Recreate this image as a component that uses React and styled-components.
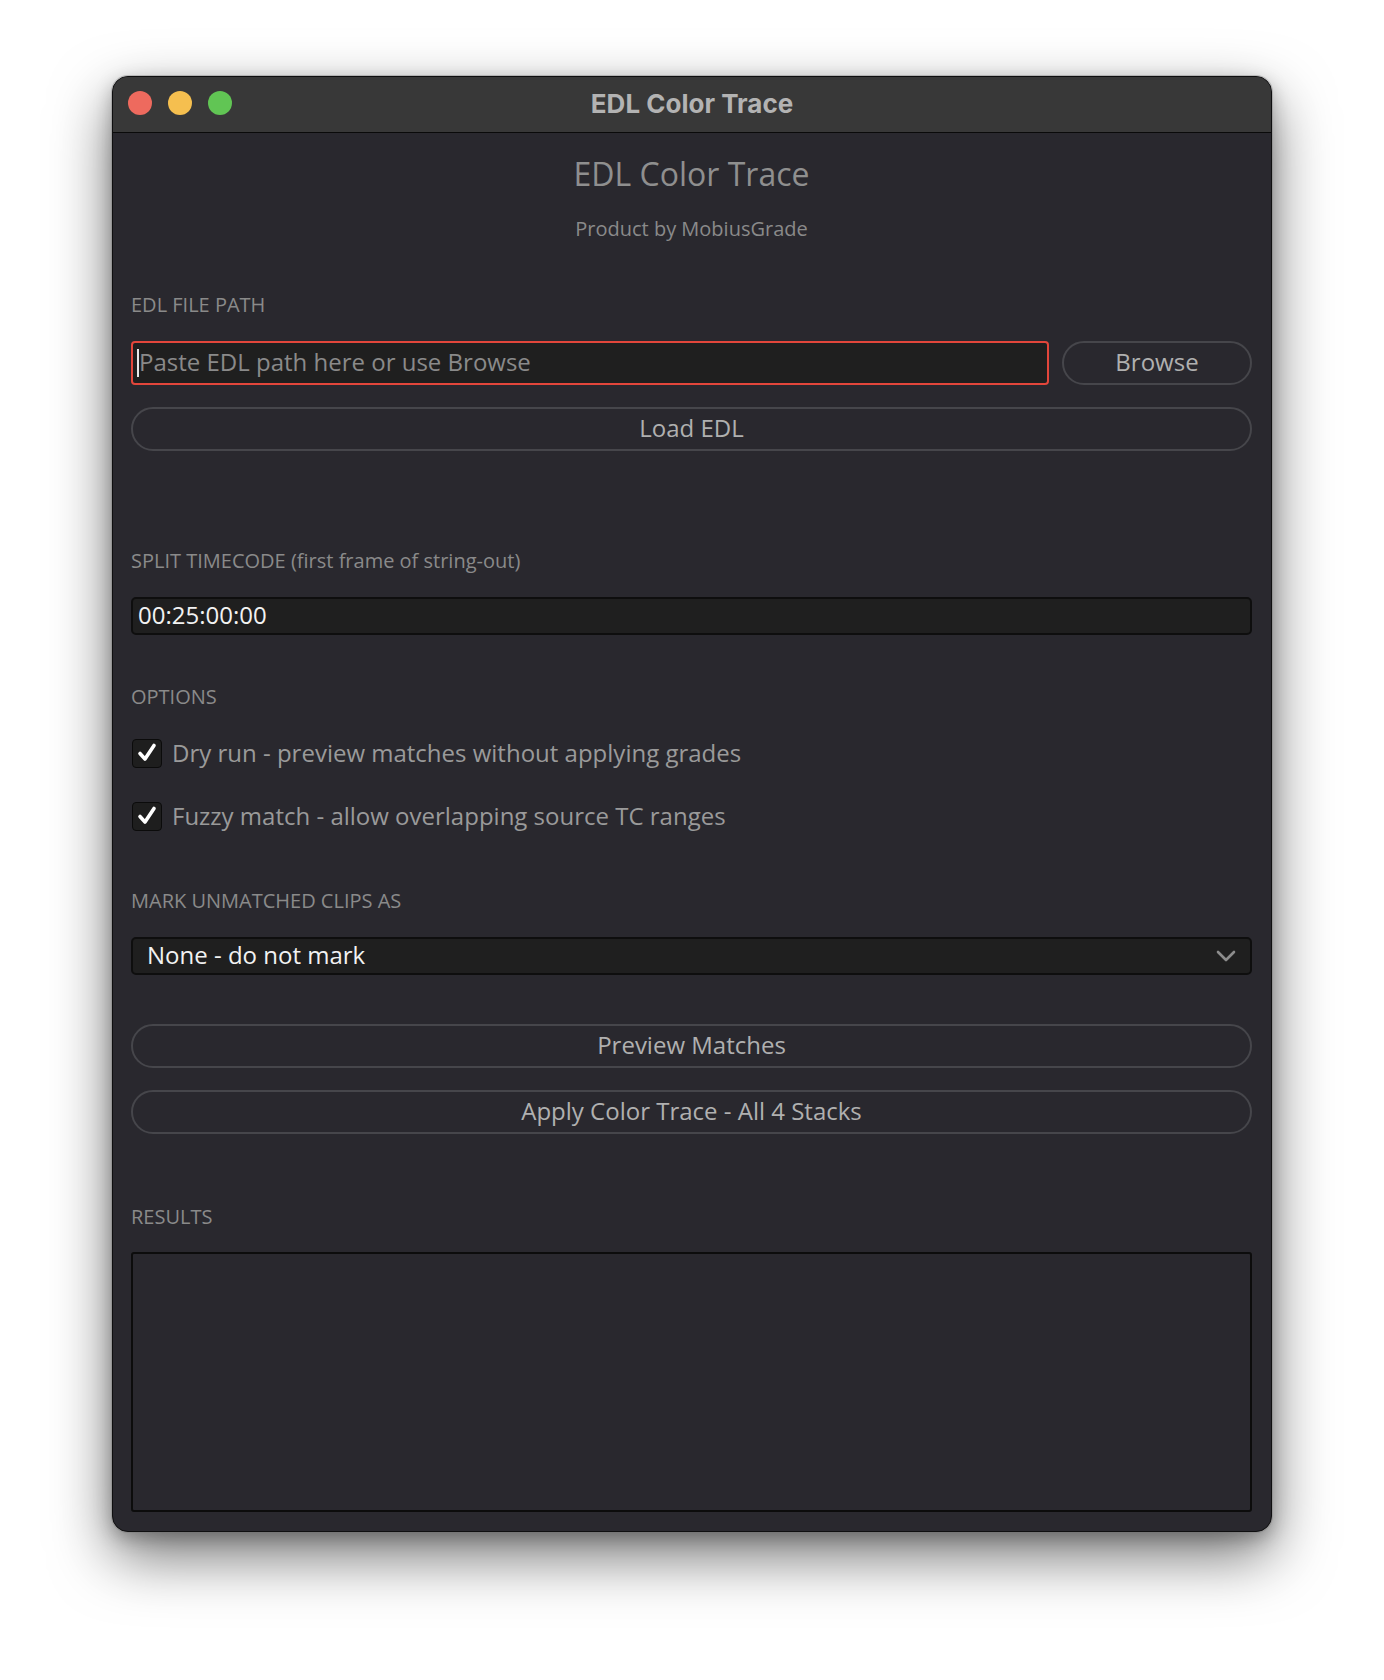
import React from "react";
import styled, { createGlobalStyle } from "styled-components";

const Global = createGlobalStyle`
  html, body { margin: 0; padding: 0; background: #ffffff; }
  body { font-family: "Open Sans", "Noto Sans", sans-serif; }
  * { box-sizing: border-box; }
`;

const Page = styled.div`
  width: 1384px;
  height: 1680px;
  padding: 76px 0 0 112px;
  background: #ffffff;
`;

const Window = styled.div`
  width: 1160px;
  height: 1456px;
  border-radius: 16px;
  border: 1px solid #0f0f10;
  background: #29282e;
  overflow: hidden;
  display: flex;
  flex-direction: column;
  box-shadow: 0 0 0 1px rgba(120, 120, 120, 0.35), 0 24px 60px rgba(0, 0, 0, 0.55),
    0 6px 18px rgba(0, 0, 0, 0.25);
`;

const TitleBar = styled.div`
  height: 56px;
  flex: none;
  background: #383838;
  border-bottom: 1px solid #0a0a0a;
  display: grid;
  grid-template-columns: 1fr auto 1fr;
  align-items: center;
  padding: 0 15px 3px 15px;
`;

const Lights = styled.div`
  display: flex;
  gap: 16px;
`;

const Light = styled.span`
  width: 24px;
  height: 24px;
  border-radius: 50%;
  background: ${(p) => p.$c};
`;

const WindowTitle = styled.div`
  font-family: "Inter", "Open Sans", sans-serif;
  font-weight: 700;
  font-size: 26px;
  color: #b3b3b3;
`;

const Content = styled.div`
  flex: 1;
  display: flex;
  flex-direction: column;
  padding: 21px 19px 19px 18px;
`;

const Heading = styled.h1`
  margin: 0;
  text-align: center;
  font-weight: 400;
  font-size: 32px;
  line-height: 40px;
  color: #8f8f8f;
`;

const Sub = styled.div`
  margin-top: 22px;
  text-align: center;
  font-size: 20px;
  line-height: 26px;
  color: #8a8a8a;
`;

const Label = styled.div`
  margin-top: ${(p) => p.$mt}px;
  font-size: 20px;
  line-height: 26px;
  color: #8a8a8a;
  text-transform: uppercase;
`;

const Lower = styled.span`
  text-transform: none;
`;

const Row = styled.div`
  margin-top: 23px;
  display: flex;
  gap: 13px;
`;

const InputShell = styled.label`
  flex: 1;
  height: 44px;
  display: flex;
  align-items: center;
  padding: 0 4px 3px 4px;
  background: #1f1f1f;
  border: 2px solid #e2463b;
  border-radius: 4px;
`;

const Caret = styled.span`
  width: 2px;
  height: 28px;
  margin-top: 3px;
  background: #e8e8e8;
  flex: none;
`;

const TextInput = styled.input`
  flex: 1;
  min-width: 0;
  background: transparent;
  border: 0;
  outline: none;
  padding: 0;
  font-family: "Open Sans", sans-serif;
  font-size: 24px;
  color: #e6e6e6;
  &::placeholder { color: #8a8a8a; opacity: 1; }
`;

const PillButton = styled.button`
  height: 44px;
  width: ${(p) => (p.$w ? `${p.$w}px` : "100%")};
  flex: none;
  margin-top: ${(p) => p.$mt || 0}px;
  border: 2px solid #46464b;
  border-radius: 22px;
  background: transparent;
  color: #b0b0b0;
  font-family: "Open Sans", sans-serif;
  font-size: 24px;
  padding: 0 0 4px 0;
  cursor: pointer;
`;

const Field = styled.div`
  margin-top: 23px;
  height: 38px;
  display: flex;
  align-items: center;
  justify-content: space-between;
  padding: 0 14px 3px ${(p) => p.$pl}px;
  background: #1f1f1f;
  border: 2px solid #0e0e0e;
  border-radius: 5px;
  font-size: 24px;
  color: #f2f2f2;
`;

const ChevronBox = styled.span`
  display: flex;
  margin-top: 3px;
`;

const Options = styled.div`
  margin-top: 28px;
  display: flex;
  flex-direction: column;
  gap: 33px;
`;

const CheckRow = styled.div`
  height: 30px;
  display: flex;
  align-items: center;
  gap: 10px;
  font-size: 24px;
  color: #9a9a9a;
`;

const CheckText = styled.span`
  margin-top: -2px;
`;

const Box = styled.span`
  width: 30px;
  height: 29px;
  flex: none;
  display: flex;
  align-items: center;
  justify-content: center;
  margin-left: 1px;
  background: #1e1e1e;
  border: 1px solid #0b0b0b;
  border-radius: 4px;
`;

const Results = styled.div`
  margin-top: 22px;
  flex: 1;
  border: 2px solid #0c0c0c;
  border-radius: 3px;
  background: #29282e;
`;

const Check = () => (
  <svg width="22" height="22" viewBox="0 0 22 22">
    <path d="M4 11.5 L9 17 L18 3.5" fill="none" stroke="#ffffff" strokeWidth="3.6" strokeLinecap="round" strokeLinejoin="round" />
  </svg>
);

const Chevron = () => (
  <svg width="20" height="14" viewBox="0 0 20 14">
    <path d="M2 3 L10 11 L18 3" fill="none" stroke="#8c8c8c" strokeWidth="2.6" strokeLinecap="round" strokeLinejoin="round" />
  </svg>
);

export default function App() {
  return (
    <Page>
      <Global />
      <Window>
        <TitleBar>
          <Lights>
            <Light $c="#ee6a5e" />
            <Light $c="#f5bf4f" />
            <Light $c="#61c554" />
          </Lights>
          <WindowTitle>EDL Color Trace</WindowTitle>
          <span />
        </TitleBar>
        <Content>
          <Heading>EDL Color Trace</Heading>
          <Sub>Product by MobiusGrade</Sub>

          <Label $mt={50}>EDL File Path</Label>
          <Row>
            <InputShell>
              <Caret />
              <TextInput placeholder="Paste EDL path here or use Browse" />
            </InputShell>
            <PillButton $w={190}>Browse</PillButton>
          </Row>
          <PillButton $mt={22}>Load EDL</PillButton>

          <Label $mt={97}>Split Timecode <Lower>(first frame of string-out)</Lower></Label>
          <Field $pl={5}>00:25:00:00</Field>

          <Label $mt={49}>Options</Label>
          <Options>
            <CheckRow>
              <Box><Check /></Box>
              <CheckText>Dry run - preview matches without applying grades</CheckText>
            </CheckRow>
            <CheckRow>
              <Box><Check /></Box>
              <CheckText>Fuzzy match - allow overlapping source TC ranges</CheckText>
            </CheckRow>
          </Options>

          <Label $mt={57}>Mark unmatched clips as</Label>
          <Field $pl={14}>
            <span>None - do not mark</span>
            <ChevronBox><Chevron /></ChevronBox>
          </Field>

          <PillButton $mt={49}>Preview Matches</PillButton>
          <PillButton $mt={22}>Apply Color Trace - All 4 Stacks</PillButton>

          <Label $mt={70}>Results</Label>
          <Results />
        </Content>
      </Window>
    </Page>
  );
}
